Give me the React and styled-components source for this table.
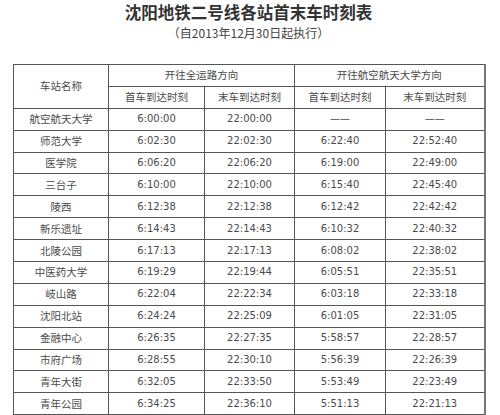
import React from 'react';
import styled, { createGlobalStyle } from 'styled-components';

const GlobalStyle = createGlobalStyle`
  html, body {
    margin: 0;
    padding: 0;
    background: #fff;
  }
`;

const Page = styled.div`
  width: 500px;
  height: 415px;
  overflow: hidden;
  box-sizing: border-box;
  padding: 0 16px 0 13px;
  font-family: "DejaVu Sans", "Noto Sans CJK SC", sans-serif;
  color: #4a4a4a;
`;

const Title = styled.h1`
  margin: 0;
  padding-top: 1px;
  height: 22px;
  line-height: 22px;
  text-align: center;
  font-family: "Noto Sans CJK SC", sans-serif;
  font-size: 16.5px;
  font-weight: 700;
  color: #333;
`;

const Subtitle = styled.div`
  height: 20px;
  line-height: 20px;
  text-align: center;
  font-family: "Noto Sans CJK SC", sans-serif;
  font-size: 12px;
  color: #444;
  margin-bottom: 21px;
`;

const Table = styled.table`
  width: 471px;
  border-collapse: collapse;
  table-layout: fixed;
  border: 1px solid #555;
  border-right: 2px solid #777;
`;

const Col = styled.col`
  width: ${p => p.$w}px;
`;

const Cell = styled.td`
  border: 1px solid #555;
  height: 20.9px;
  padding: 0;
  text-align: center;
  vertical-align: middle;
  font-size: ${p => (p.$num ? '10px' : '10.5px')};
  font-weight: 400;
  line-height: 12px;
  color: #4a4a4a;
  white-space: nowrap;
`;

const HeadCell = styled(Cell).attrs({ as: 'th' })`
  font-weight: 400;
`;

const colWidths = [95, 96, 90, 91, 99];

const rows = [
  ['航空航天大学', '6:00:00', '22:00:00', '——', '——'],
  ['师范大学', '6:02:30', '22:02:30', '6:22:40', '22:52:40'],
  ['医学院', '6:06:20', '22:06:20', '6:19:00', '22:49:00'],
  ['三台子', '6:10:00', '22:10:00', '6:15:40', '22:45:40'],
  ['陵西', '6:12:38', '22:12:38', '6:12:42', '22:42:42'],
  ['新乐遗址', '6:14:43', '22:14:43', '6:10:32', '22:40:32'],
  ['北陵公园', '6:17:13', '22:17:13', '6:08:02', '22:38:02'],
  ['中医药大学', '6:19:29', '22:19:44', '6:05:51', '22:35:51'],
  ['岐山路', '6:22:04', '22:22:34', '6:03:18', '22:33:18'],
  ['沈阳北站', '6:24:24', '22:25:09', '6:01:05', '22:31:05'],
  ['金融中心', '6:26:35', '22:27:35', '5:58:57', '22:28:57'],
  ['市府广场', '6:28:55', '22:30:10', '5:56:39', '22:26:39'],
  ['青年大街', '6:32:05', '22:33:50', '5:53:49', '22:23:49'],
  ['青年公园', '6:34:25', '22:36:10', '5:51:13', '22:21:13'],
];

export default function App() {
  return (
    <Page>
      <GlobalStyle />
      <Title>沈阳地铁二号线各站首末车时刻表</Title>
      <Subtitle>（自2013年12月30日起执行）</Subtitle>
      <Table>
        <colgroup>
          {colWidths.map((w, i) => <Col key={i} $w={w} />)}
        </colgroup>
        <thead>
          <tr>
            <HeadCell rowSpan={2}>车站名称</HeadCell>
            <HeadCell colSpan={2}>开往全运路方向</HeadCell>
            <HeadCell colSpan={2}>开往航空航天大学方向</HeadCell>
          </tr>
          <tr>
            <HeadCell>首车到达时刻</HeadCell>
            <HeadCell>末车到达时刻</HeadCell>
            <HeadCell>首车到达时刻</HeadCell>
            <HeadCell>末车到达时刻</HeadCell>
          </tr>
        </thead>
        <tbody>
          {rows.map(r => (
            <tr key={r[0]}>
              <Cell>{r[0]}</Cell>
              {r.slice(1).map((v, i) => (
                <Cell key={i} $num>{v}</Cell>
              ))}
            </tr>
          ))}
        </tbody>
      </Table>
    </Page>
  );
}
